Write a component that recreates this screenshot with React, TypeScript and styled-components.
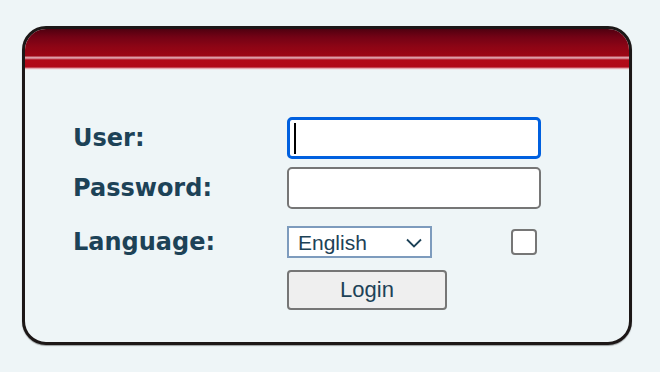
import React from "react";
import styled, { createGlobalStyle } from "styled-components";

const Global = createGlobalStyle`
  html, body { margin: 0; padding: 0; background: #eef5f7; }
  body { font-family: "DejaVu Sans", Verdana, sans-serif; }
  * { box-sizing: border-box; }
`;

const Page = styled.div`
  width: 660px;
  height: 372px;
  padding: 26px 0 0 22px;
  background: #eef5f7;
`;

const Card = styled.div`
  width: 610px;
  height: 319px;
  border: 3px solid #1c1717;
  border-radius: 24px;
  overflow: hidden;
  background: #eef5f7;
  box-shadow: 0 1px 1px rgba(0, 0, 0, 0.35);
`;

const Header = styled.div`
  height: 41px;
  background: linear-gradient(
    to bottom,
    #500010 0px,
    #730215 8px,
    #8e0515 18px,
    #9d0614 27px,
    #d7919b 28px,
    #e3aab3 29px,
    #c24c5a 30px,
    #b20a18 31px,
    #b00918 38px,
    #d97f8a 39px,
    #f0d6da 40px,
    #eef5f7 41px
  );
`;

const Form = styled.div`
  padding: 47px 0 0 48px;
  display: flex;
  flex-direction: column;
`;

const Row = styled.div<{ $mt: number }>`
  display: flex;
  align-items: center;
  margin-top: ${(p) => p.$mt}px;
`;

const Label = styled.label`
  width: 214px;
  font-family: "DejaVu Sans", Verdana, sans-serif;
  font-weight: bold;
  font-size: 24px;
  color: #1d4257;
`;

const Field = styled.div`
  position: relative;
  width: 254px;
  display: flex;
  align-items: center;
`;

const TextInput = styled.input<{ $focused?: boolean }>`
  width: 254px;
  height: 42px;
  margin: 0;
  padding: 0 8px;
  background: #ffffff;
  border: ${(p) => (p.$focused ? "3px solid #0060df" : "2px solid #767676")};
  border-radius: 5px;
  outline: none;
  font-family: "Liberation Sans", Arial, sans-serif;
  font-size: 22px;
`;

const Caret = styled.span`
  position: absolute;
  left: 7px;
  top: 6px;
  width: 2px;
  height: 31px;
  background: #000;
`;

const SelectBox = styled.div`
  position: relative;
  width: 145px;
  height: 32px;
`;

const Select = styled.select`
  appearance: none;
  -webkit-appearance: none;
  width: 145px;
  height: 32px;
  margin: 0;
  padding: 0 0 0 9px;
  border: 2px solid #7d9bbd;
  border-radius: 0;
  background: #ffffff;
  color: #1d4257;
  font-family: "Liberation Sans", Arial, sans-serif;
  font-size: 21px;
  outline: none;
`;

const Chevron = styled.svg`
  position: absolute;
  right: 10px;
  top: 12px;
  pointer-events: none;
`;

const Check = styled.input`
  appearance: none;
  -webkit-appearance: none;
  width: 26px;
  height: 26px;
  margin: 0 4px 0 auto;
  border: 2px solid #767676;
  border-radius: 4px;
  background: #ffffff;
`;

const Button = styled.button`
  width: 160px;
  height: 40px;
  margin: 0;
  padding: 0;
  background: #efefef;
  border: 2px solid #767676;
  border-radius: 4px;
  color: #1d4257;
  font-family: "Liberation Sans", Arial, sans-serif;
  font-size: 22px;
`;

const Spacer = styled.div`
  width: 214px;
`;

export default function App() {
  return (
    <Page>
      <Global />
      <Card>
        <Header />
        <Form>
          <Row $mt={0}>
            <Label>User:</Label>
            <Field>
              <TextInput $focused type="text" />
              <Caret />
            </Field>
          </Row>
          <Row $mt={8}>
            <Label>Password:</Label>
            <Field>
              <TextInput type="password" />
            </Field>
          </Row>
          <Row $mt={17}>
            <Label>Language:</Label>
            <Field>
              <SelectBox>
                <Select defaultValue="en">
                  <option value="en">English</option>
                </Select>
                <Chevron width="16" height="10" viewBox="0 0 16 10">
                  <path d="M1 1.5 L8 8.5 L15 1.5" fill="none" stroke="#1d4257" strokeWidth="1.8" />
                </Chevron>
              </SelectBox>
              <Check type="checkbox" />
            </Field>
          </Row>
          <Row $mt={12}>
            <Spacer />
            <Button>Login</Button>
          </Row>
        </Form>
      </Card>
    </Page>
  );
}
